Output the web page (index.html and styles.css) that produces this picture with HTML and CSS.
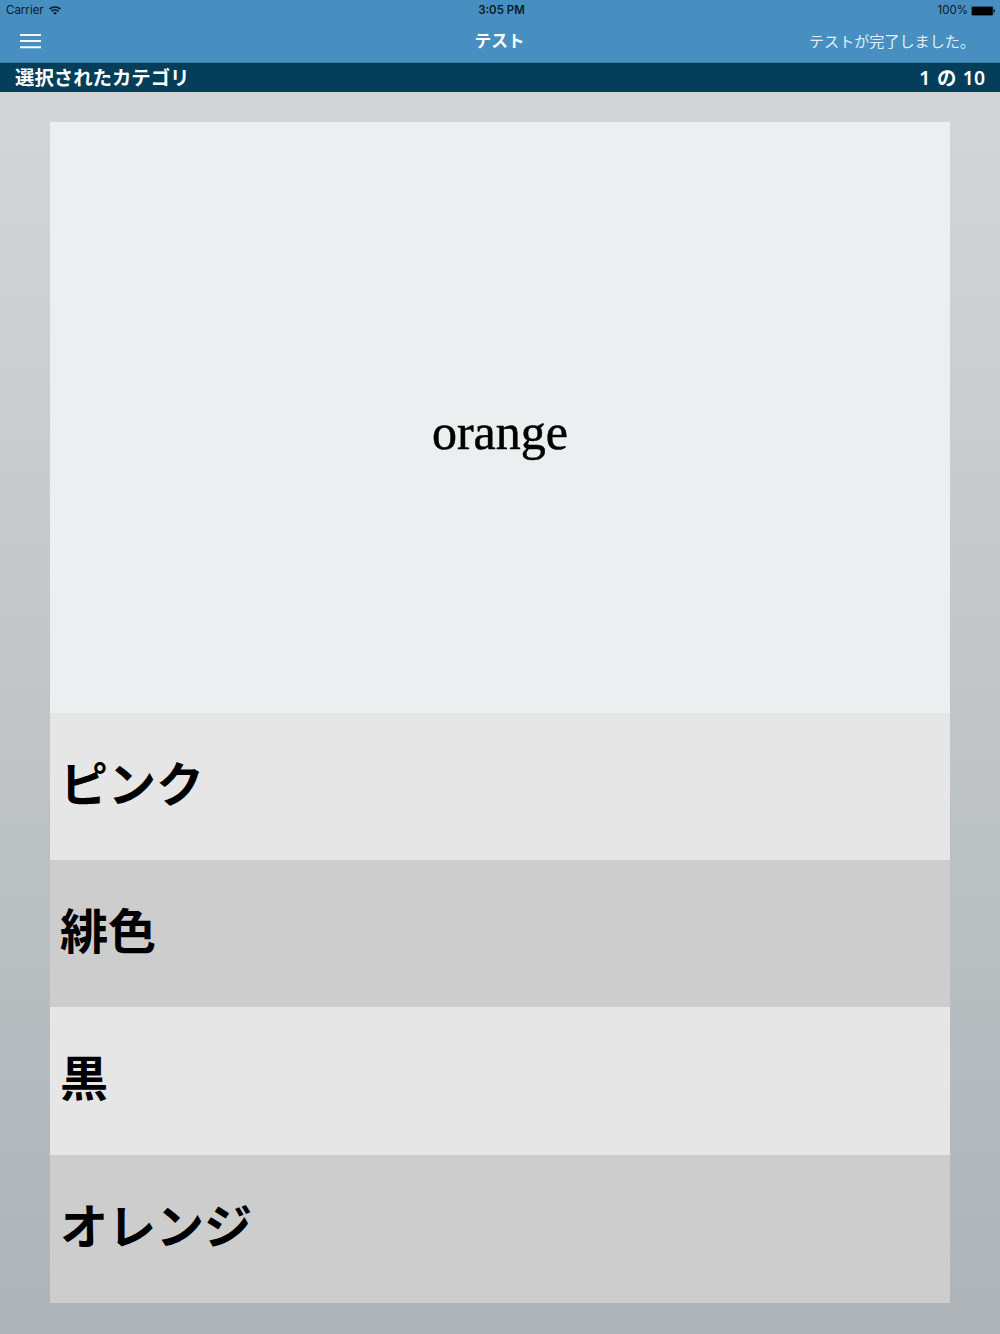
FILE: index.html
```html
<!DOCTYPE html>
<html lang="ja">
<head>
<meta charset="utf-8">
<title>テスト</title>
<link rel="stylesheet" href="styles.css">
</head>
<body>
<div class="app">
  <header class="header">
    <div class="status">
      <div class="carrier"><span>Carrier</span>
        <svg class="wifi" width="12" height="9" viewBox="0 0 12 9" fill="none" stroke="#0b1a26" stroke-width="1.7"><path d="M.6 3.2a7.7 7.7 0 0 1 10.8 0M2.6 5.3a4.9 4.9 0 0 1 6.8 0"/><path d="M6 8.8 4.1 6.9a2.8 2.8 0 0 1 3.8 0Z" fill="#0b1a26" stroke="none"/></svg>
      </div>
      <div class="clock">3:05 PM</div>
      <div class="power"><span>100%</span>
        <svg width="24" height="10" viewBox="0 0 24 10"><rect x=".3" y=".3" width="22" height="9.4" rx="1.4" fill="#1d4560"/><rect x="1" y="1" width="20.6" height="8" rx=".7"/><path d="M22.8 3.3c1.5.4 1.5 3 0 3.4Z"/></svg>
      </div>
    </div>
    <nav class="nav">
      <svg class="menu" width="21" height="16" viewBox="0 0 21 16" fill="#f4f8fb"><path d="M0 .9h21v2H0zM0 7.1h21v2H0zM0 13.3h21v2H0z"/></svg>
      <h1 class="title">テスト</h1>
      <span class="done">テストが完了しました。</span>
    </nav>
  </header>
  <div class="category">
    <span class="category-name">選択されたカテゴリ</span>
    <span class="progress">1 の 10</span>
  </div>
  <main class="quiz">
    <div class="question">orange</div>
    <ul class="answers">
      <li class="answer">ピンク</li>
      <li class="answer">緋色</li>
      <li class="answer">黒</li>
      <li class="answer">オレンジ</li>
    </ul>
  </main>
</div>
</body>
</html>
```
FILE: styles.css
```css
* { box-sizing: border-box; }
body { margin: 0; font-family: Inter, "Noto Sans CJK JP", sans-serif; }
.app {
  height: 1334px;
  display: flex;
  flex-direction: column;
  overflow: hidden;
  background: linear-gradient(#d3d6d6 92px, #adb3b7);
}
.header {
  height: 63px;
  background: #468fc0;
  border-bottom: 1px solid #3879a3;
}
.status {
  height: 20px;
  padding: 1px 5px 0 6px;
  display: grid;
  grid-template-columns: 1fr auto 1fr;
  align-items: center;
  font-size: 11.5px;
  line-height: 19px;
  color: #0b1a26;
}
.carrier, .power { display: flex; align-items: center; gap: 5px; }
.power { justify-content: flex-end; gap: 3px; }
.wifi { margin-top: -1px; }
.clock { font-weight: 600; padding-left: 2px; }
.nav {
  height: 42px;
  padding: 0 25px 0 20px;
  display: grid;
  grid-template-columns: 1fr auto 1fr;
  align-items: center;
  color: #fff;
}
.title {
  margin: 0 0 2px;
  padding-left: 4px;
  font: bold 16.7px/24px "Noto Sans CJK JP", sans-serif;
}
.done {
  justify-self: end;
  margin-bottom: 2px;
  font: 15.1px/24px "Noto Sans CJK JP", sans-serif;
  color: #e3eef6;
}
.category {
  height: 29px;
  padding: 0 15px;
  display: flex;
  justify-content: space-between;
  align-items: center;
  background: #043e5b;
  color: #fff;
  font-size: 19.4px;
  font-weight: 600;
  line-height: 29px;
}
.category-name {
  padding-bottom: 2px;
  line-height: 27px;
  font-family: "Noto Sans CJK JP", sans-serif;
}
.progress {
  font-family: "Noto Sans", "Noto Sans CJK JP", sans-serif;
  word-spacing: 1.5px;
}
.quiz {
  height: 1181px;
  margin: 30px 50px 0;
  display: grid;
  grid-template-rows: 591px 590px;
}
.question {
  display: flex;
  align-items: center;
  justify-content: center;
  padding-top: 28px;
  background: #ebeff0;
  font: 50px/60px "Liberation Serif", serif;
  -webkit-text-stroke: .5px #000;
  color: #000;
}
.answers {
  margin: 0;
  padding: 0;
  list-style: none;
  display: grid;
  grid-template-rows: 147px 147px 148px 148px;
}
.answer {
  display: flex;
  align-items: center;
  padding: 0 10px 12px;
  background: #e6e6e6;
  font: bold 48px/72px "Noto Sans CJK JP", sans-serif;
  color: #000;
}
.answer:nth-child(even) { background: #cdcdcd; }
```
